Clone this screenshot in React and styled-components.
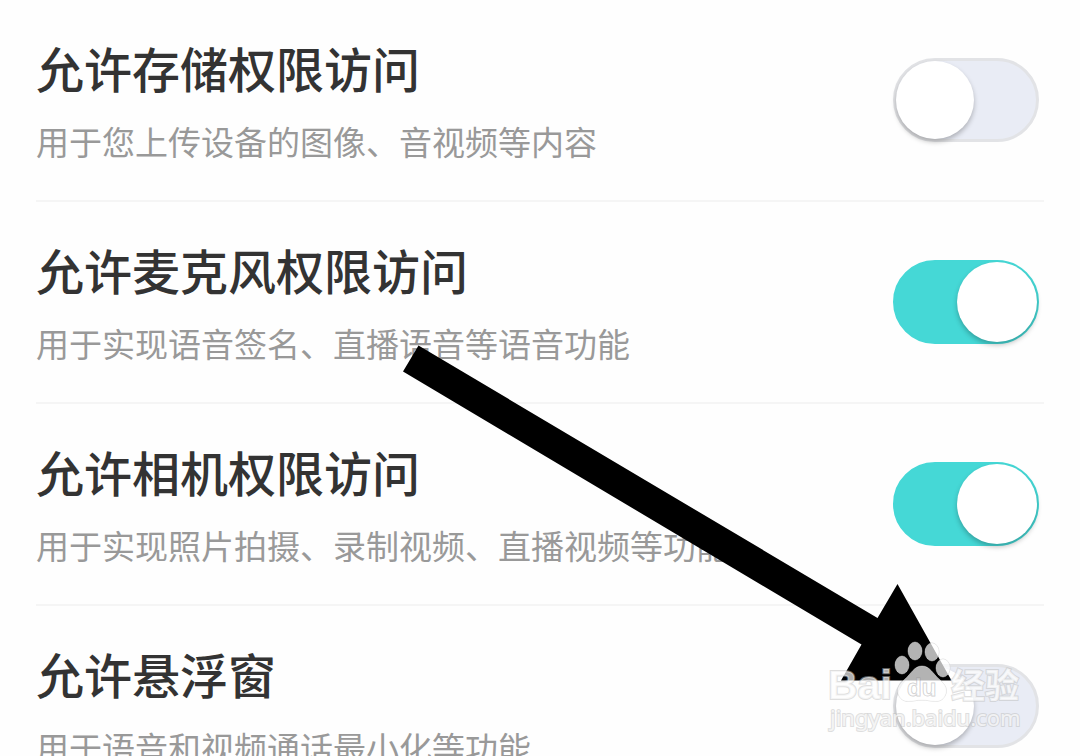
import React, { useState } from 'react';
import styled, { createGlobalStyle } from 'styled-components';

const GlobalStyle = createGlobalStyle`
  * {
    box-sizing: border-box;
  }

  body {
    margin: 0;
    background: #fefefe;
    font-family: 'Noto Sans CJK SC', 'Noto Sans', sans-serif;
  }
`;

const Page = styled.main`
  position: relative;
  height: 100vh;
  padding: 0 36px;
  overflow: hidden;
`;

const List = styled.ul`
  list-style: none;
  margin: 0;
  padding: 0;
`;

const Row = styled.li`
  display: flex;
  align-items: center;
  justify-content: space-between;
  gap: 24px;
  padding: 32px 5px 32px 0;
  border-bottom: 2px solid #f5f5f5;
`;

const RowText = styled.label`
  display: flex;
  flex-direction: column;
  gap: 12px;
  white-space: nowrap;
  cursor: pointer;
`;

const Title = styled.span`
  color: #333;
  font-size: 48px;
  font-weight: 500;
  line-height: 70px;
`;

const Description = styled.span`
  color: #999;
  font-size: 33px;
  font-weight: 400;
  line-height: 54px;
`;

const Switch = styled.input`
  appearance: none;
  display: flex;
  flex: none;
  justify-content: ${props => props.checked ? 'flex-end' : 'flex-start'};
  width: 146px;
  height: 84px;
  margin: 0;
  border: ${props => props.checked ? '2px solid #45d8d6' : '3px solid #e2e3e6'};
  border-radius: 42px;
  background: ${props => props.checked ? '#45d8d6' : '#e9ecf5'};
  cursor: pointer;

  &::before {
    content: '';
    height: 100%;
    aspect-ratio: 1;
    border-radius: 50%;
    background: white;
    box-shadow: 0 3px 5px rgba(0, 0, 0, 0.25);
  }
`;

const Arrow = styled.svg`
  position: absolute;
  left: 403px;
  top: 345px;
  pointer-events: none;
`;

const Watermark = styled.svg`
  position: absolute;
  left: 822px;
  top: 635px;
  pointer-events: none;
  fill: rgba(255, 255, 255, 0.7);
  stroke: rgba(190, 190, 190, 0.5);
  stroke-width: 2px;
  paint-order: stroke;

  .paw {
    stroke-width: 1px;
  }

  .logo {
    font: bold 41px 'Liberation Sans', sans-serif;
  }

  .du {
    font: bold 24px 'Liberation Sans', sans-serif;
    fill: rgba(255, 255, 255, 0.3);
    stroke: rgba(130, 130, 130, 0.4);
    stroke-width: 1px;
  }

  .cn {
    font: bold 34px 'Noto Sans CJK SC', sans-serif;
  }

  .site {
    font: 22px 'Noto Sans', sans-serif;
  }
`;

const permissions = [
  { id: 'storage', title: '允许存储权限访问', description: '用于您上传设备的图像、音视频等内容', enabled: false },
  { id: 'microphone', title: '允许麦克风权限访问', description: '用于实现语音签名、直播语音等语音功能', enabled: true },
  { id: 'camera', title: '允许相机权限访问', description: '用于实现照片拍摄、录制视频、直播视频等功能', enabled: true },
  { id: 'overlay', title: '允许悬浮窗', description: '用于语音和视频通话最小化等功能', enabled: false },
];

function PermissionRow({ permission }) {
  const [enabled, setEnabled] = useState(permission.enabled);

  return (
    <Row>
      <RowText htmlFor={permission.id}>
        <Title>{permission.title}</Title>
        <Description>{permission.description}</Description>
      </RowText>
      <Switch
        id={permission.id}
        type="checkbox"
        checked={enabled}
        onChange={e => setEnabled(e.target.checked)}
      />
    </Row>
  );
}

function App() {
  return (
    <Page>
      <GlobalStyle />
      <List>
        {permissions.map(permission => (
          <PermissionRow key={permission.id} permission={permission} />
        ))}
      </List>

      <Arrow width="550" height="340" viewBox="0 0 550 340" aria-hidden="true">
        <path d="M15.5 .5 L474.5 273 L494.5 239 L548.5 335.5 H438 L458.5 299.5 L0 26.5 Z" />
      </Arrow>

      <Watermark width="210" height="106" viewBox="0 0 210 106">
        <text className="logo" x="6" y="64">Bai</text>
        <g className="paw">
          <ellipse cx="80" cy="30" rx="7" ry="9" />
          <ellipse cx="93" cy="16" rx="7" ry="9" />
          <ellipse cx="110" cy="17" rx="7" ry="9" />
          <ellipse cx="121" cy="33" rx="7" ry="9" />
          <path d="M100 31 C108 31 111 39 117 44 C124 50 126 55 123 61 C118 70 109 65 100 65 C91 65 82 70 77 61 C74 55 76 50 83 44 C89 39 92 31 100 31 Z" />
        </g>
        <text className="du" x="85" y="61">du</text>
        <text className="cn" x="129" y="63">经验</text>
        <text className="site" x="8" y="91">jingyan.baidu.com</text>
      </Watermark>
    </Page>
  );
}

export default App;
